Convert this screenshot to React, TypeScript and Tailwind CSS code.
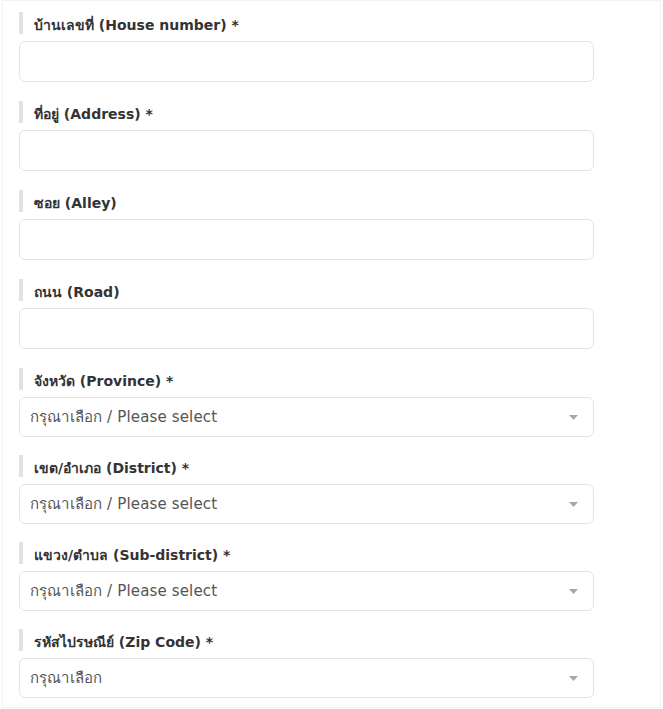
import React from "react";

type Field = {
  label: string;
  required?: boolean;
  kind: "input" | "select";
  placeholder?: string;
};

const fields: Field[] = [
  { label: "บ้านเลขที่ (House number)", required: true, kind: "input" },
  { label: "ที่อยู่ (Address)", required: true, kind: "input" },
  { label: "ซอย (Alley)", kind: "input" },
  { label: "ถนน (Road)", kind: "input" },
  { label: "จังหวัด (Province)", required: true, kind: "select", placeholder: "กรุณาเลือก / Please select" },
  { label: "เขต/อำเภอ (District)", required: true, kind: "select", placeholder: "กรุณาเลือก / Please select" },
  { label: "แขวง/ตำบล (Sub-district)", required: true, kind: "select", placeholder: "กรุณาเลือก / Please select" },
  { label: "รหัสไปรษณีย์ (Zip Code)", required: true, kind: "select", placeholder: "กรุณาเลือก" },
];

function FieldLabel({ text, required }: { text: string; required?: boolean }) {
  return (
    <div className="h-[22px] border-l-4 border-[#e2e2e2] pl-[11px] pt-[4px] flex items-center text-[14px] font-bold text-[#333] leading-none">
      <span>
        {text}
        {required && " *"}
      </span>
    </div>
  );
}

function SelectBox({ placeholder }: { placeholder?: string }) {
  return (
    <div className="mt-[7px] h-[40px] w-[575px] rounded-md border border-[#e4e4e4] bg-white flex items-center justify-between pl-[10px] pr-[15px]">
      <span className="text-[15px] text-[#555] tracking-[0.15px]">{placeholder}</span>
      <svg width="9" height="5" viewBox="0 0 9 5" className="text-[#a8a8a8]">
        <path d="M0 0h9L4.5 5z" fill="currentColor" />
      </svg>
    </div>
  );
}

export default function App() {
  return (
    <div className="bg-white min-h-screen" style={{ fontFamily: '"DejaVu Sans", "Noto Sans", sans-serif' }}>
      <div className="ml-[2px] w-[659px] h-[708px] border border-[#f3f3f3] pl-[16px] pt-[11px]">
        {fields.map((f, i) => (
          <div
            key={f.label}
            className={
              f.kind === "input"
                ? "mb-[19px]"
                : i === fields.length - 1
                ? ""
                : "mb-[18px]"
            }
          >
            <FieldLabel text={f.label} required={f.required} />
            {f.kind === "input" ? (
              <input
                type="text"
                className="mt-[7px] block h-[41px] w-[575px] rounded-md border border-[#e4e4e4] bg-white px-3 outline-none"
              />
            ) : (
              <SelectBox placeholder={f.placeholder} />
            )}
          </div>
        ))}
      </div>
    </div>
  );
}
